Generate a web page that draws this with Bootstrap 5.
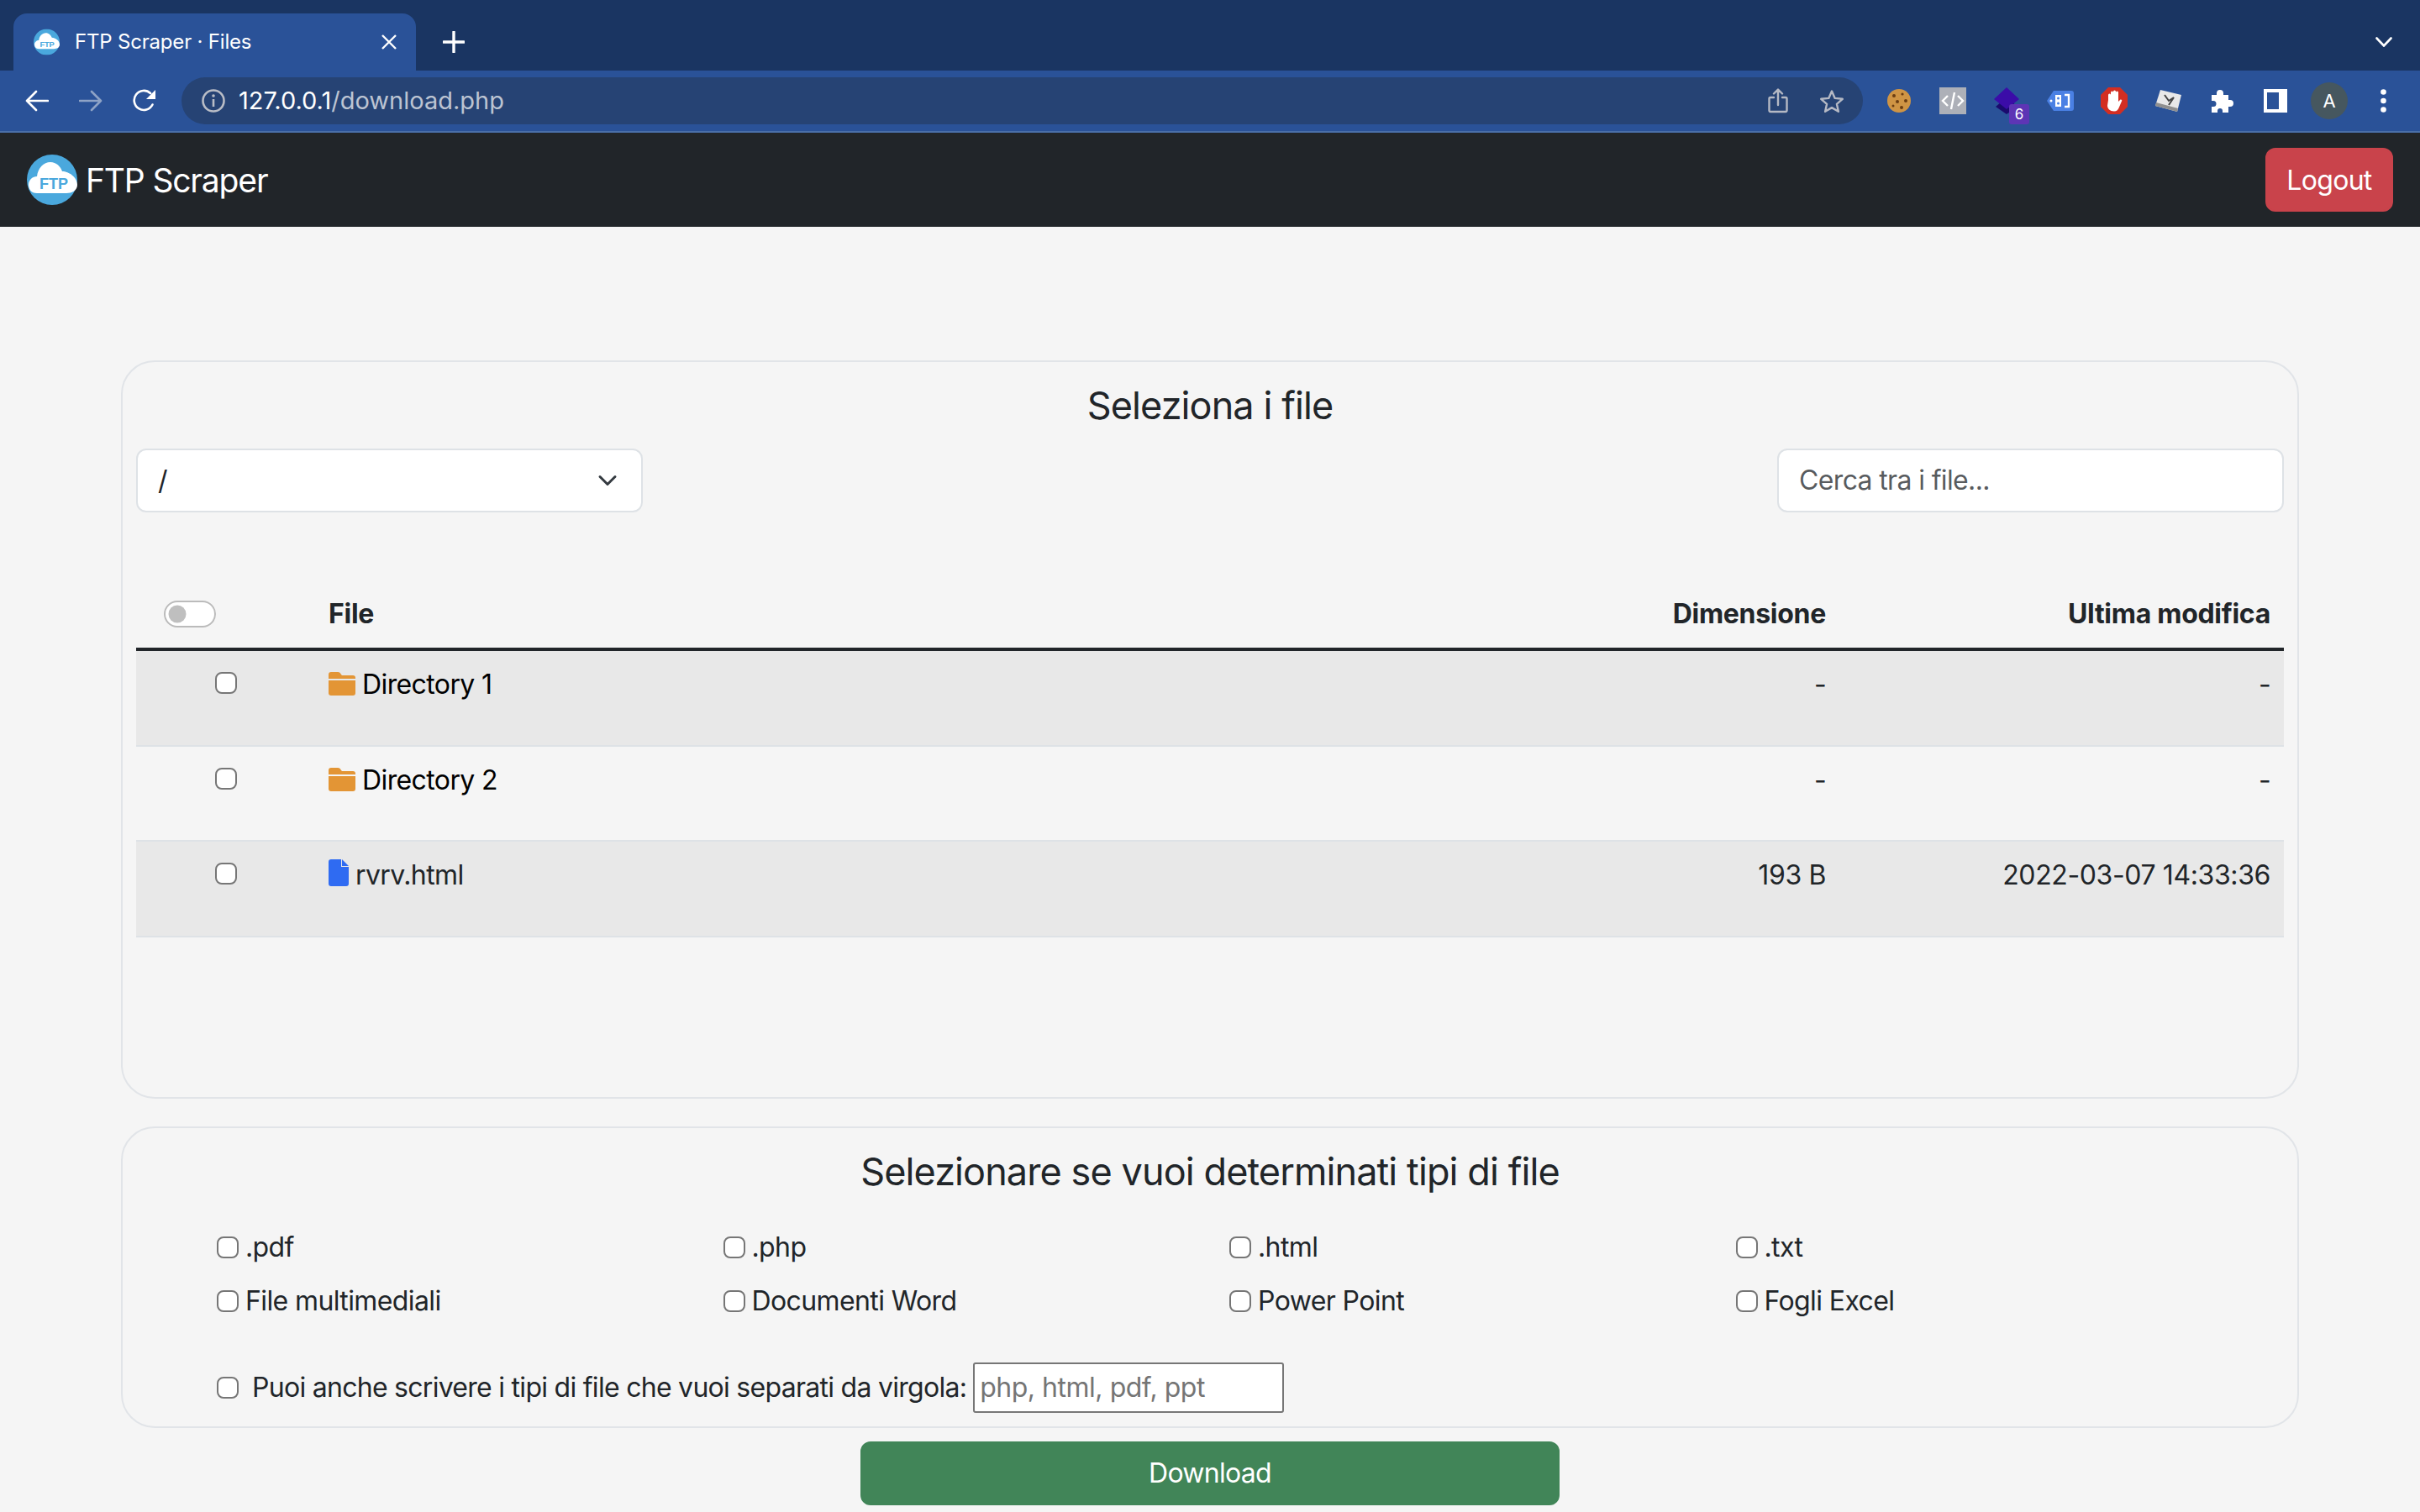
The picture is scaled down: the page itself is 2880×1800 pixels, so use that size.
<!DOCTYPE html>
<html lang="it">
<head>
    <meta charset="UTF-8">
    <meta name="viewport" content="width=device-width, initial-scale=1.0">
    <title>FTP Scraper - Files</title>
    <link href="https://cdn.jsdelivr.net/npm/bootstrap@5.3.0/dist/css/bootstrap.min.css" rel="stylesheet">
    <style>
        /* reference is a retina capture, so everything rem based is doubled */
        html { font-size: 32px; overflow: hidden; }
        :root { --bs-border-width: 2px; --bs-border-radius: 8px; }
        body {
            --bs-body-font-family: "Inter", "Liberation Sans", sans-serif;
            --bs-body-bg: #f5f5f5;
            letter-spacing: -0.019em;
            height: 1800px;
            overflow: hidden;
        }
        .btn { letter-spacing: -0.022em; }
        .form-control { letter-spacing: -0.02em; }
        th { letter-spacing: -0.009em; }

        /* browser frame */
        .tab-strip { height: 84px; background: #1a3562; padding-left: 16px; }
        .tab-item {
            width: 479px; height: 68px; margin-top: 16px; padding: 0 22px 0 24px;
            background: #2a5298; border-radius: 16px 16px 0 0;
            color: #fff; font-size: 24px; letter-spacing: -0.008em;
        }
        .tab-label { margin-left: 18px; }
        .tab-add { margin-left: 32px; margin-top: 16px; }
        .tab-menu { margin-top: 16px; margin-right: 33px; }
        .tool-strip {
            height: 74px; background: #2a5298; border-bottom: 2px solid #4a6fa8;
            padding: 0 12px;
        }
        .tool-slot { width: 64px; height: 64px; flex: none; position: relative; }
        .url-box {
            height: 56px; background: #264374; border-radius: 28px;
            margin: 0 11px 0 12px; padding: 0 22px 0 24px;
            font-size: 29px; letter-spacing: 0;
        }
        .url-host { color: #fff; margin-left: 16px; }
        .url-path { color: #bcc4d2; }
        .url-star { margin-left: 37px; }
        .ext-count {
            position: absolute; left: 35px; top: 36px; width: 24px; height: 24px;
            background: #5d35b5; color: #fff; border-radius: 3px;
            font-size: 17px; line-height: 24px; text-align: center; letter-spacing: 0;
        }
        .avatar-dot {
            width: 44px; height: 44px; border-radius: 50%; background: #46575f;
            color: #fff; font-size: 22px; letter-spacing: 0;
        }

        /* app */
        .app-bar { height: 112px; padding: 0 32px; --bs-navbar-padding-y: 0; --bs-navbar-padding-x: 0; }
        .app-brand { font-size: 39px; padding: 2px 0 0; margin: 0; gap: 10px; letter-spacing: -0.03em; }
        .app-brand svg { margin-top: -2px; }
        .btn-logout { --bs-btn-bg: #c9434b; --bs-btn-border-color: #c9434b; width: 152px; padding: 13px 0 11px; }
        .page-wrap { width: 90%; margin: 0 auto; padding-top: 159px; }
        .pane { border: 2px solid #e1e4e8; border-radius: 40px; padding: 16px; background: transparent; }
        .pane-second { margin-top: 33px; }
        .pane-title { font-size: 45px; font-weight: 400; text-align: center; margin: 7px 0 0; line-height: 58px; letter-spacing: -0.02em; }
        .pick-row { margin-top: 22px; }
        .pick-field { width: 603px; }
        .form-select { background-size: 32px 24px; }
        .files-table { margin: 81px 0 174px; --bs-table-bg: transparent; --bs-table-striped-bg: rgba(0, 0, 0, .05); }
        .files-table th, .files-table td { padding: 16px; }
        .files-table td { padding-bottom: 47.500px; }
        .col-pick { width: 213px; }
        .col-size { width: 300px; }
        .col-date { width: 529px; }
        .cell-num { letter-spacing: -0.012em; }
        .box-native {
            width: 26px; height: 26px; margin: 0; flex: none;
            border: 2px solid #767676; border-radius: 5px; background-color: #fff;
        }
        .table-box { margin-top: 9px; }
        .switch-all { margin: 0 0 0 17px; padding: 0; min-height: 0; height: 48px; display: flex; align-items: center; }
        .switch-all .form-check-input { margin: 0; width: 62px; height: 32px; border-color: #bbb; float: none; }
        .row-icon { vertical-align: -2px; margin-right: 8px; }
        .doc-icon { margin-right: 8px; }
        .types-grid { margin-top: 37px; padding: 0 50px 0 96px; }
        .type-item { height: 48px; margin-bottom: 16px; gap: 8px; }
        .custom-types { height: 60px; padding-left: 96px; margin-top: 33px; }
        .custom-types label { margin-left: 16px; margin-right: 8px; letter-spacing: -0.0225em; }
        .native-text {
            width: 370px; height: 60px; padding: 2px 6px; border: 2px solid #767676; border-radius: 3px;
            background: #fff; font-size: 32px; letter-spacing: -0.015em; color: #212529;
        }
        .native-text::placeholder { color: #757575; }
        .btn-get { --bs-btn-bg: #418558; --bs-btn-border-color: #418558; }
    </style>
</head>
<body>
    <svg width="0" height="0" class="position-absolute">
        <symbol id="ftp-logo" viewBox="0 0 60 60">
            <circle cx="30" cy="30" r="30" fill="#4aa8dd"/>
            <path d="M12 46C5 46 2 41 2 36c0-6 5-10 10-10 1-10 8-17 16-17 7 0 12 5 14 11 8 0 18 7 18 16 0 7-7 10-13 10z" fill="#fff"/>
        </symbol>
        <symbol id="folder-ico" viewBox="0 0 32 28">
            <path d="M0 3a3 3 0 0 1 3-3h8c2 0 3 1 4 3l1 1h13a3 3 0 0 1 3 3v1H0z" fill="#e39535"/>
            <path d="M0 10h32v15a3 3 0 0 1-3 3H3a3 3 0 0 1-3-3z" fill="#e39535"/>
        </symbol>
        <symbol id="doc-ico" viewBox="0 0 24 32">
            <path d="M3 0h12v9h9v20a3 3 0 0 1-3 3H3a3 3 0 0 1-3-3V3a3 3 0 0 1 3-3z" fill="#2f6bf2"/>
            <path d="M16 0l8 8h-8z" fill="#2f6bf2"/>
        </symbol>
    </svg>

    <!-- browser frame -->
    <div class="tab-strip d-flex">
        <div class="tab-item d-flex align-items-center">
            <svg width="31" height="32" viewBox="0 0 60 60"><use href="#ftp-logo"/><text x="31" y="42" text-anchor="middle" font-family="Liberation Sans, sans-serif" font-size="18" font-weight="700" fill="#4aa8dd">FTP</text></svg>
            <span class="tab-label flex-grow-1">FTP Scraper · Files</span>
            <svg width="20" height="20" viewBox="0 0 20 20"><path d="M2 2l16 16M18 2L2 18" stroke="#fff" stroke-width="2.4"/></svg>
        </div>
        <div class="tab-add d-flex align-items-center">
            <svg width="26" height="26" viewBox="0 0 26 26"><path d="M13 1v24M1 13h24" stroke="#fff" stroke-width="3.4" stroke-linecap="round"/></svg>
        </div>
        <div class="tab-menu ms-auto d-flex align-items-center">
            <svg width="20" height="12" viewBox="0 0 20 12"><path d="M1.500 1.500L10 10.500l8.500-9" fill="none" stroke="#fff" stroke-width="2.6" stroke-linecap="round"/></svg>
        </div>
    </div>
    <div class="tool-strip d-flex align-items-center">
        <div class="tool-slot d-flex align-items-center justify-content-center">
            <svg width="28" height="26" viewBox="0 0 28 26"><path d="M27 13H2M13 2L2 13l11 11" fill="none" stroke="#fff" stroke-width="2.6" stroke-linecap="round" stroke-linejoin="round"/></svg>
        </div>
        <div class="tool-slot d-flex align-items-center justify-content-center">
            <svg width="28" height="26" viewBox="0 0 28 26"><path d="M1 13h25M15 2l11 11-11 11" fill="none" stroke="#8ea3c6" stroke-width="2.6" stroke-linecap="round" stroke-linejoin="round"/></svg>
        </div>
        <div class="tool-slot d-flex align-items-center justify-content-center">
            <svg width="28" height="28" viewBox="0 0 28 28"><path d="M23.500 18.500A11.500 11.500 0 1 1 21 5" fill="none" stroke="#fff" stroke-width="2.6" stroke-linecap="round"/><path d="M27 1v11H16z" fill="#fff"/></svg>
        </div>
        <div class="url-box flex-grow-1 d-flex align-items-center">
            <svg width="28" height="28" viewBox="0 0 28 28"><circle cx="14" cy="14" r="12.500" fill="none" stroke="#b9bdc6" stroke-width="2.600"/><path d="M14 12v9" stroke="#b9bdc6" stroke-width="2.600"/><circle cx="14" cy="8" r="1.800" fill="#b9bdc6"/></svg>
            <span class="url-host">127.0.0.1<span class="url-path">/download.php</span></span>
            <svg class="ms-auto" width="24" height="30" viewBox="0 0 24 30"><path d="M7 11H3a1.500 1.500 0 0 0-1.500 1.500v14A1.500 1.500 0 0 0 3 28h18a1.500 1.500 0 0 0 1.500-1.500v-14A1.500 1.500 0 0 0 21 11h-4M12 20V2M7 6.500L12 1.500l5 5" fill="none" stroke="#b5b9c4" stroke-width="2.400" stroke-linecap="round" stroke-linejoin="round"/></svg>
            <svg class="url-star" width="30" height="29" viewBox="0 0 30 29"><path d="M15 2.500l3.700 8.400 9.100.9-6.900 6 2 9-7.900-4.700-7.900 4.700 2-9-6.900-6 9.100-.9z" fill="none" stroke="#b5b9c4" stroke-width="2.400" stroke-linejoin="round"/></svg>
        </div>
        <div class="tool-slot d-flex align-items-center justify-content-center">
            <svg width="28" height="28" viewBox="0 0 28 28"><circle cx="14" cy="14" r="14" fill="#cf9444"/><g fill="#6b3d12"><circle cx="8" cy="8" r="2"/><circle cx="18" cy="6" r="1.600"/><circle cx="22" cy="14" r="2"/><circle cx="12" cy="15" r="2"/><circle cx="7" cy="20" r="1.500"/><circle cx="17" cy="22" r="2"/></g></svg>
        </div>
        <div class="tool-slot d-flex align-items-center justify-content-center">
            <svg width="32" height="32" viewBox="0 0 32 32"><rect width="32" height="32" fill="#adb0b8"/><path d="M10 10l-6 6 6 6M22 10l6 6-6 6M18 6l-4 20" fill="none" stroke="#fff" stroke-width="2.400"/></svg>
        </div>
        <div class="tool-slot d-flex align-items-center justify-content-center">
            <svg width="32" height="32" viewBox="0 0 32 32"><path d="M16 12l13 11-13 9L3 23z" fill="#1a0a6e"/><path d="M16 0l15 14-15 12L1 14z" fill="#3b0ca8"/></svg>
            <span class="ext-count">6</span>
        </div>
        <div class="tool-slot d-flex align-items-center justify-content-center">
            <svg width="32" height="24" viewBox="0 0 32 24"><path d="M8 0h21a3 3 0 0 1 3 3v18a3 3 0 0 1-3 3H8L0 12z" fill="#4a80e4"/><path d="M10 5h7v14h-7z" fill="#fff"/><path d="M21 5h5v14h-5" fill="none" stroke="#fff" stroke-width="2.400"/><circle cx="13.500" cy="9" r="1.500" fill="#4a80e4"/><circle cx="13.500" cy="15" r="1.500" fill="#4a80e4"/><circle cx="5" cy="12" r="1.500" fill="#fff"/></svg>
        </div>
        <div class="tool-slot d-flex align-items-center justify-content-center">
            <svg width="32" height="32" viewBox="0 0 32 32"><path d="M9 0h14l9 9v14l-9 9H9l-9-9V9z" fill="#d32e22"/><path d="M9 15V9a1.500 1.500 0 0 1 3 0v5-8a1.500 1.500 0 0 1 3 0v8-9a1.500 1.500 0 0 1 3 0v9-8a1.500 1.500 0 0 1 3 0v11l2-2c1-1 3 0 2 1.500l-3 7c-1 3-3 5-6 5-5 0-8-3-8-7z" fill="#fff"/></svg>
        </div>
        <div class="tool-slot d-flex align-items-center justify-content-center">
            <svg width="32" height="26" viewBox="0 0 32 26"><path d="M7 0l25 6-5 20L1 19z" fill="#e8e8e8"/><path d="M1 19l26 7 1-4L2 15z" fill="#8f8f8f"/><path d="M12 6l5 7 6-4-6 9" fill="none" stroke="#444" stroke-width="2"/></svg>
        </div>
        <div class="tool-slot d-flex align-items-center justify-content-center">
            <svg width="30" height="28" viewBox="0 0 30 28"><path d="M3 7h6V5a4 4 0 0 1 8 0v2h6v6h2a4 4 0 0 1 0 8h-2v7h-7v-2a3 3 0 0 0-6 0v2H3v-7h2a3.500 3.500 0 0 0 0-7H3z" fill="#fff"/></svg>
        </div>
        <div class="tool-slot d-flex align-items-center justify-content-center">
            <svg width="28" height="28" viewBox="0 0 28 28"><path fill-rule="evenodd" d="M0 0h28v28H0zM4 4v20h14V4z" fill="#fff"/></svg>
        </div>
        <div class="tool-slot d-flex align-items-center justify-content-center">
            <span class="avatar-dot d-flex align-items-center justify-content-center">A</span>
        </div>
        <div class="tool-slot d-flex align-items-center justify-content-center">
            <svg width="7" height="28" viewBox="0 0 7 28"><circle cx="3.500" cy="3.500" r="3.300" fill="#fff"/><circle cx="3.500" cy="14" r="3.300" fill="#fff"/><circle cx="3.500" cy="24.500" r="3.300" fill="#fff"/></svg>
        </div>
    </div>

    <!-- app -->
    <nav class="navbar navbar-dark bg-dark app-bar">
        <a class="navbar-brand app-brand d-flex align-items-center" href="#">
            <svg width="60" height="60" viewBox="0 0 60 60"><use href="#ftp-logo"/><text x="32" y="41" text-anchor="middle" font-family="Liberation Sans, sans-serif" font-size="18" font-weight="700" fill="#4aa8dd" letter-spacing="0">FTP</text></svg>
            FTP Scraper
        </a>
        <button class="btn btn-danger btn-logout" type="button">Logout</button>
    </nav>

    <main class="page-wrap">
        <section class="pane">
            <h4 class="pane-title">Seleziona i file</h4>
            <div class="d-flex justify-content-between pick-row">
                <select class="form-select pick-field">
                    <option>/</option>
                </select>
                <input type="text" class="form-control pick-field" placeholder="Cerca tra i file...">
            </div>
            <table class="table table-striped files-table">
                <thead>
                    <tr>
                        <th class="col-pick">
                            <div class="form-check form-switch switch-all"><input class="form-check-input" type="checkbox"></div>
                        </th>
                        <th>File</th>
                        <th class="col-size text-end">Dimensione</th>
                        <th class="col-date text-end">Ultima modifica</th>
                    </tr>
                </thead>
                <tbody class="table-group-divider">
                    <tr>
                        <td class="text-center"><input class="form-check-input box-native table-box" type="checkbox"></td>
                        <td class="text-black"><svg class="row-icon" width="32" height="28"><use href="#folder-ico"/></svg>Directory 1</td>
                        <td class="text-end">-</td>
                        <td class="text-end">-</td>
                    </tr>
                    <tr>
                        <td class="text-center"><input class="form-check-input box-native table-box" type="checkbox"></td>
                        <td class="text-black"><svg class="row-icon" width="32" height="28"><use href="#folder-ico"/></svg>Directory 2</td>
                        <td class="text-end">-</td>
                        <td class="text-end">-</td>
                    </tr>
                    <tr>
                        <td class="text-center"><input class="form-check-input box-native table-box" type="checkbox"></td>
                        <td><svg class="row-icon doc-icon" width="24" height="32"><use href="#doc-ico"/></svg>rvrv.html</td>
                        <td class="text-end cell-num">193 B</td>
                        <td class="text-end cell-num">2022-03-07 14:33:36</td>
                    </tr>
                </tbody>
            </table>
        </section>

        <section class="pane pane-second">
            <h4 class="pane-title">Selezionare se vuoi determinati tipi di file</h4>
            <div class="row g-0 types-grid">
                <div class="col-3"><label class="type-item d-flex align-items-center"><input class="form-check-input box-native" type="checkbox">.pdf</label></div>
                <div class="col-3"><label class="type-item d-flex align-items-center"><input class="form-check-input box-native" type="checkbox">.php</label></div>
                <div class="col-3"><label class="type-item d-flex align-items-center"><input class="form-check-input box-native" type="checkbox">.html</label></div>
                <div class="col-3"><label class="type-item d-flex align-items-center"><input class="form-check-input box-native" type="checkbox">.txt</label></div>
                <div class="col-3"><label class="type-item d-flex align-items-center"><input class="form-check-input box-native" type="checkbox">File multimediali</label></div>
                <div class="col-3"><label class="type-item d-flex align-items-center"><input class="form-check-input box-native" type="checkbox">Documenti Word</label></div>
                <div class="col-3"><label class="type-item d-flex align-items-center"><input class="form-check-input box-native" type="checkbox">Power Point</label></div>
                <div class="col-3"><label class="type-item d-flex align-items-center"><input class="form-check-input box-native" type="checkbox">Fogli Excel</label></div>
            </div>
            <div class="custom-types d-flex align-items-center">
                <input class="form-check-input box-native" type="checkbox">
                <label>Puoi anche scrivere i tipi di file che vuoi separati da virgola:</label>
                <input type="text" class="native-text" placeholder="php, html, pdf, ppt">
            </div>
        </section>

        <div class="row mt-2">
            <div class="col-4 offset-4">
                <button class="btn btn-success btn-get w-100" type="button">Download</button>
            </div>
        </div>
    </main>
</body>
</html>
